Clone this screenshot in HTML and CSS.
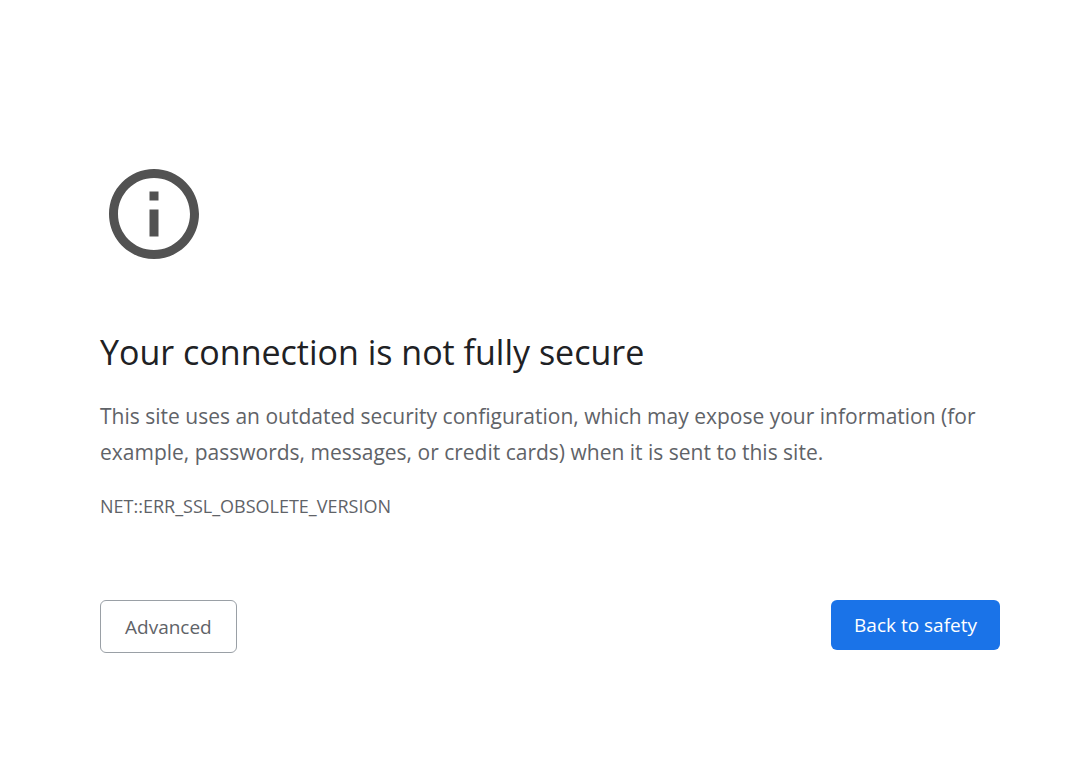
FILE: index.html
```html
<!DOCTYPE html>
<html lang="en">
<head>
<meta charset="utf-8">
<title>Privacy error</title>
<link rel="stylesheet" href="styles.css">
</head>
<body>
<main class="interstitial">
  <svg class="icon" viewBox="0 0 24 24" aria-hidden="true"><path d="M11 17h2v-6h-2v6zm1-15C6.480 2 2 6.480 2 12s4.480 10 10 10 10-4.480 10-10S17.520 2 12 2zm0 18c-4.410 0-8-3.590-8-8s3.590-8 8-8 8 3.590 8 8-3.590 8-8 8zM11 9h2V7h-2v2z"/></svg>
  <h1 class="title">Your connection is not fully secure</h1>
  <p class="message">This site uses an outdated security configuration, which may expose your information (for example, passwords, messages, or credit cards) when it is sent to this site.</p>
  <p class="code">NET::ERR_SSL_OBSOLETE_VERSION</p>
  <div class="actions">
    <button class="button secondary" type="button">Advanced</button>
    <button class="button primary" type="button">Back to safety</button>
  </div>
</main>
</body>
</html>
```
FILE: styles.css
```css
body {
  margin: 0;
  background: #fff;
  color: #5f6368;
  font-family: "Segoe UI", "Open Sans", "Noto Sans", sans-serif;
}

.interstitial {
  max-width: 900px;
  margin: 0 68px 0 100px;
  padding-top: 160px;
}

.icon {
  display: block;
  width: 108px;
  height: 108px;
  fill: #525252;
}

.title {
  margin: 60px 0 22px;
  color: #202124;
  font-size: 34px;
  font-weight: 400;
  line-height: 48px;
}

.message {
  margin: 0;
  font-size: 21px;
  line-height: 36px;
}

.code {
  margin: 22px 0 0;
  font-size: 18px;
  line-height: 28px;
}

.actions {
  display: flex;
  justify-content: space-between;
  align-items: flex-start;
  margin-top: 80px;
}

.button {
  padding: 10px 23px;
  border: 0;
  border-radius: 6px;
  font: inherit;
  font-size: 19px;
  line-height: 30px;
}

.primary {
  background: #1a73e8;
  color: #fff;
}

.secondary {
  padding: 11px 24px 10px;
  border: 1px solid #9aa0a6;
  background: #fff;
  color: #5f6368;
}
```
